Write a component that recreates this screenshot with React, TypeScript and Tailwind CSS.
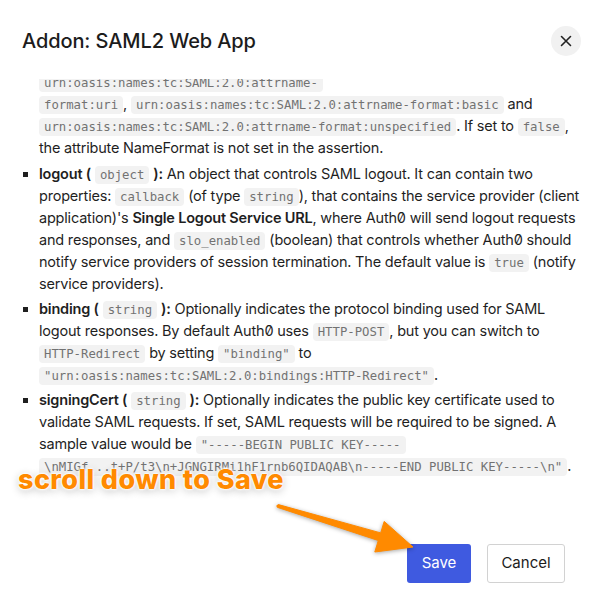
const Code = ({ children }: { children: React.ReactNode }) => (
  <code className="whitespace-nowrap rounded-[4px] bg-[#f2f2f2] px-[5px] py-[2px] font-['DejaVu_Sans_Mono',monospace] text-[12.3px] leading-none tracking-normal text-[#727272]">
    {children}
  </code>
);

const Arrow = () => (
  <svg
    className="pointer-events-none absolute left-0 top-0 drop-shadow-[0_1px_2px_rgba(0,0,0,0.35)]"
    width="605"
    height="610"
    viewBox="0 0 605 610"
  >
    <polygon
      points="277.6,507.4 278.4,504.6 380.7,532.9 384.2,521.4 413,547 374.8,552 378.3,540.5"
      fill="#ff8a00"
      strokeLinejoin="round"
      stroke="#ff8a00"
      strokeWidth="1"
    />
    <circle cx="278" cy="506" r="1.6" fill="#ff8a00" />
  </svg>
);

export default function App() {
  return (
    <div className="relative h-[610px] w-[605px] overflow-hidden bg-white font-['Inter',sans-serif] text-[#1f1f1f]">
      {/* Header */}
      <div className="flex h-[79px] items-start justify-between pl-[22px] pr-[24px] pt-[26px]">
        <h2 className="h-[30px] text-[20px] font-medium leading-[30px] tracking-[-0.1px] text-[#1c1c1c]">
          Addon: SAML2 Web App
        </h2>
        <button className="flex h-[30px] w-[30px] items-center justify-center rounded-full bg-[#f1f1f1] text-[#222]">
          <svg width="12" height="12" viewBox="0 0 12 12" fill="none" stroke="currentColor" strokeWidth="1.6" strokeLinecap="round">
            <path d="M1.5 1.5l9 9M10.5 1.5l-9 9" />
          </svg>
        </button>
      </div>

      {/* Scrolled body */}
      <div className="h-[403px] overflow-hidden">
        <ul className="-mt-[8px] list-[square] pl-[39px] pr-[22px] text-[14.5px] leading-[22px] tracking-[-0.2px] [font-feature-settings:'zero'] marker:text-[#1f1f1f]">
          <li className="list-none">
            <Code>urn:oasis:names:tc:SAML:2.0:attrname-</Code>
            <br />
            <Code>format:uri</Code>, <Code>urn:oasis:names:tc:SAML:2.0:attrname-format:basic</Code> and{' '}
            <Code>urn:oasis:names:tc:SAML:2.0:attrname-format:unspecified</Code>. If set to <Code>false</Code>,
            the attribute NameFormat is not set in the assertion.
          </li>
          <li className="mt-[4px]">
            <b className="font-semibold">logout (</b> <Code>object</Code> <b className="font-semibold">):</b> An
            object that controls SAML logout. It can contain two properties: <Code>callback</Code> (of type{' '}
            <Code>string</Code>), that contains the service provider (client application)'s{' '}
            <b className="font-semibold">Single Logout Service URL</b>, where Auth0 will send logout requests and
            responses, and <Code>slo_enabled</Code> (boolean) that controls whether Auth0 should notify service
            providers of session termination. The default value is <Code>true</Code> (notify service providers).
          </li>
          <li className="mt-[3px]">
            <b className="font-semibold">binding (</b> <Code>string</Code> <b className="font-semibold">):</b>{' '}
            Optionally indicates the protocol binding used for SAML logout responses. By default Auth0 uses{' '}
            <Code>HTTP-POST</Code>, but you can switch to <Code>HTTP-Redirect</Code> by setting{' '}
            <Code>"binding"</Code> to <Code>"urn:oasis:names:tc:SAML:2.0:bindings:HTTP-Redirect"</Code>.
          </li>
          <li className="mt-[3px]">
            <b className="font-semibold">signingCert (</b> <Code>string</Code>{' '}
            <b className="font-semibold">):</b> Optionally indicates the public key certificate used to validate
            SAML requests. If set, SAML requests will be required to be signed. A sample value would be{' '}
            <Code>"-----BEGIN PUBLIC KEY-----</Code>
            <br />
            <Code>\nMIGf...t+P/t3\n+JGNGIRMi1hF1rnb6QIDAQAB\n-----END PUBLIC KEY-----\n"</Code>.
          </li>
        </ul>
      </div>

      {/* Footer */}
      <div className="flex justify-end gap-4 pr-[40px] pt-[62px]">
        <button className="h-[39px] w-[64px] rounded-[3px] bg-[#3f5ae0] text-[15px] text-white">Save</button>
        <button className="h-[39px] w-[78px] rounded-[3px] border border-[#d2d2d2] bg-white text-[15px] text-[#1c1c1c]">
          Cancel
        </button>
      </div>

      {/* Annotation */}
      <Arrow />
      <div className="absolute left-[18px] top-[466px] text-[27px] font-extrabold leading-none tracking-[0.4px] text-[#ff8a00] [text-shadow:0_0_2px_#fff,0_0_2px_#fff,0_0_3px_#fff,0_0_4px_#fff,0_2px_8px_rgba(0,0,0,0.3)]">
        scroll down to Save
      </div>
    </div>
  );
}
